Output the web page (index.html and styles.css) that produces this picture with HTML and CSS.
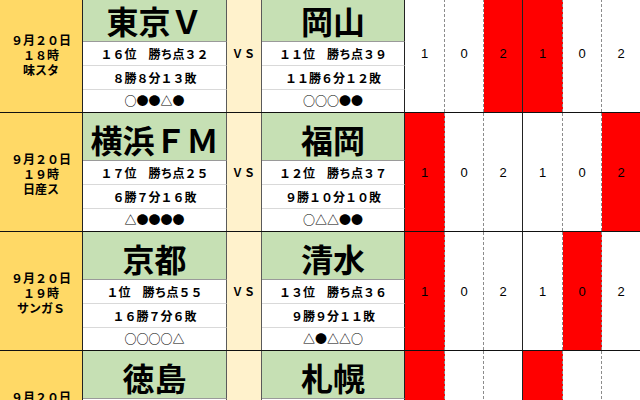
FILE: index.html
```html
<!DOCTYPE html>
<html lang="ja">
<head>
<meta charset="utf-8">
<title>対戦表</title>
<link rel="stylesheet" href="styles.css">
</head>
<body>
<div class="sheet">

  <div class="match">
    <div class="date">９月２０日<br>１８時<br>味スタ</div>
    <div class="name home">東京Ｖ</div>
    <div class="info home r2">１６位　勝ち点３２</div>
    <div class="info home r3">８勝８分１３敗</div>
    <div class="info home r4 last">○●●△●</div>
    <div class="vs">ＶＳ</div>
    <div class="name away">岡山</div>
    <div class="info away r2">１１位　勝ち点３９</div>
    <div class="info away r3">１１勝６分１２敗</div>
    <div class="info away r4 last">○○○●●</div>
    <div class="num c5">1</div>
    <div class="num c6">0</div>
    <div class="num c7 red">2</div>
    <div class="num c8 red">1</div>
    <div class="num c9">0</div>
    <div class="num c10">2</div>
  </div>

  <div class="match">
    <div class="date">９月２０日<br>１９時<br>日産ス</div>
    <div class="name home">横浜ＦＭ</div>
    <div class="info home r2">１７位　勝ち点２５</div>
    <div class="info home r3">６勝７分１６敗</div>
    <div class="info home r4 last">△●●●●</div>
    <div class="vs">ＶＳ</div>
    <div class="name away">福岡</div>
    <div class="info away r2">１２位　勝ち点３７</div>
    <div class="info away r3">９勝１０分１０敗</div>
    <div class="info away r4 last">○△△●●</div>
    <div class="num c5 red">1</div>
    <div class="num c6">0</div>
    <div class="num c7">2</div>
    <div class="num c8">1</div>
    <div class="num c9">0</div>
    <div class="num c10 red">2</div>
  </div>

  <div class="match">
    <div class="date">９月２０日<br>１９時<br>サンガＳ</div>
    <div class="name home">京都</div>
    <div class="info home r2">１位　勝ち点５５</div>
    <div class="info home r3">１６勝７分６敗</div>
    <div class="info home r4 last">○○○○△</div>
    <div class="vs">ＶＳ</div>
    <div class="name away">清水</div>
    <div class="info away r2">１３位　勝ち点３６</div>
    <div class="info away r3">９勝９分１１敗</div>
    <div class="info away r4 last">△●△△○</div>
    <div class="num c5 red">1</div>
    <div class="num c6">0</div>
    <div class="num c7">2</div>
    <div class="num c8">1</div>
    <div class="num c9 red">0</div>
    <div class="num c10">2</div>
  </div>

  <div class="match">
    <div class="date">９月２０日<br>１９時<br>鳴門大塚</div>
    <div class="name home">徳島</div>
    <div class="info home r2">５位　勝ち点４５</div>
    <div class="info home r3">１３勝６分１０敗</div>
    <div class="info home r4 last">○●○○△</div>
    <div class="vs">ＶＳ</div>
    <div class="name away">札幌</div>
    <div class="info away r2">１０位　勝ち点４０</div>
    <div class="info away r3">１１勝７分１１敗</div>
    <div class="info away r4 last">●○△○●</div>
    <div class="num c5 red">1</div>
    <div class="num c6">0</div>
    <div class="num c7">2</div>
    <div class="num c8 red">1</div>
    <div class="num c9">0</div>
    <div class="num c10">2</div>
  </div>

</div>
</body>
</html>
```

FILE: styles.css
```css
html, body {
  margin: 0;
  padding: 0;
  overflow: hidden;
  background: #ffffff;
}

body {
  font-family: "Noto Sans CJK JP", "Liberation Sans", sans-serif;
  color: #000;
}

.sheet {
  width: 640px;
  margin-top: -6px;
}

.match {
  display: grid;
  grid-template-columns: 83px 144px 35px 143px 40px 39px 39px 40px 39px 38px;
  grid-template-rows: 48px 24px 24px 22px;
  height: 119px;
  box-sizing: border-box;
  border-bottom: 1px solid #111;
}

.match > div {
  box-sizing: border-box;
  display: flex;
  align-items: center;
  justify-content: center;
  text-align: center;
}

.date {
  grid-column: 1;
  grid-row: 1 / -1;
  background: #ffd966;
  border-right: 1px solid #222;
  font-size: 12px;
  font-weight: 700;
  line-height: 15px;
  padding-top: 2px;
}

.name {
  grid-row: 1;
  background: #c6e0b4;
  font-size: 32px;
  font-weight: 700;
  line-height: 1;
  padding-top: 5px;
  border-bottom: 1px solid #9a9a9a;
}

.home { grid-column: 2; border-right: 1px solid #5a5a5a; }
.away { grid-column: 4; border-right: 1px solid #222; }

.info {
  font-size: 12px;
  font-weight: 700;
  line-height: 1;
  background: #fff;
  border-bottom: 1px solid #d9d9d9;
}
.info.last { border-bottom: none; }
.r2 { grid-row: 2; }
.r3 { grid-row: 3; }
.r4 { grid-row: 4; }

.vs {
  grid-column: 3;
  grid-row: 1 / -1;
  background: #fff2cc;
  border-right: 1px solid #5a5a5a;
  font-size: 11px;
  font-weight: 700;
  letter-spacing: 1px;
}

.num {
  grid-row: 1 / -1;
  font-family: "Liberation Sans", Arial, sans-serif;
  font-size: 13px;
  background: #fff;
  border-right: 1px dashed #8c8c8c;
}
.num.red { background: #ff0000; }
.c5 { grid-column: 5; }
.c6 { grid-column: 6; }
.c7 { grid-column: 7; border-right: 1px solid #222 !important; }
.c8 { grid-column: 8; }
.c9 { grid-column: 9; }
.c10 { grid-column: 10; border-right: none !important; }
```
